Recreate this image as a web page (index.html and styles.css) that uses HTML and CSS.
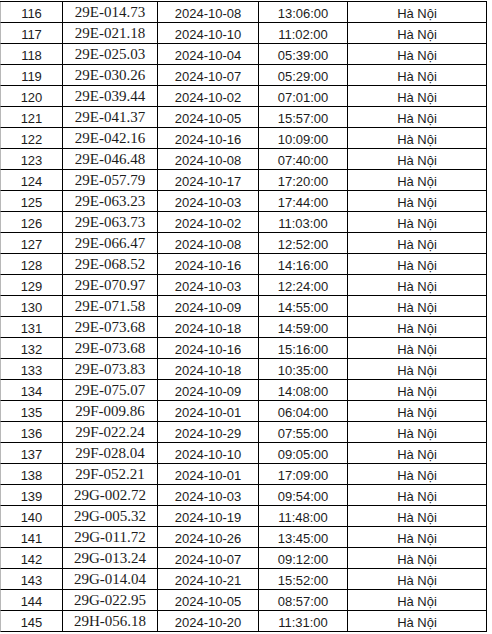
FILE: index.html
```html
<!DOCTYPE html>
<html lang="vi">
<head>
<meta charset="utf-8">
<title>Danh sách</title>
<link rel="stylesheet" href="styles.css">
</head>
<body>
<div class="sheet">
<div class="row"><div class="c n">116</div><div class="c p">29E-014.73</div><div class="c d">2024-10-08</div><div class="c t">13:06:00</div><div class="c l">Hà Nội</div></div>
<div class="row"><div class="c n">117</div><div class="c p">29E-021.18</div><div class="c d">2024-10-10</div><div class="c t">11:02:00</div><div class="c l">Hà Nội</div></div>
<div class="row"><div class="c n">118</div><div class="c p">29E-025.03</div><div class="c d">2024-10-04</div><div class="c t">05:39:00</div><div class="c l">Hà Nội</div></div>
<div class="row"><div class="c n">119</div><div class="c p">29E-030.26</div><div class="c d">2024-10-07</div><div class="c t">05:29:00</div><div class="c l">Hà Nội</div></div>
<div class="row"><div class="c n">120</div><div class="c p">29E-039.44</div><div class="c d">2024-10-02</div><div class="c t">07:01:00</div><div class="c l">Hà Nội</div></div>
<div class="row"><div class="c n">121</div><div class="c p">29E-041.37</div><div class="c d">2024-10-05</div><div class="c t">15:57:00</div><div class="c l">Hà Nội</div></div>
<div class="row"><div class="c n">122</div><div class="c p">29E-042.16</div><div class="c d">2024-10-16</div><div class="c t">10:09:00</div><div class="c l">Hà Nội</div></div>
<div class="row"><div class="c n">123</div><div class="c p">29E-046.48</div><div class="c d">2024-10-08</div><div class="c t">07:40:00</div><div class="c l">Hà Nội</div></div>
<div class="row"><div class="c n">124</div><div class="c p">29E-057.79</div><div class="c d">2024-10-17</div><div class="c t">17:20:00</div><div class="c l">Hà Nội</div></div>
<div class="row"><div class="c n">125</div><div class="c p">29E-063.23</div><div class="c d">2024-10-03</div><div class="c t">17:44:00</div><div class="c l">Hà Nội</div></div>
<div class="row"><div class="c n">126</div><div class="c p">29E-063.73</div><div class="c d">2024-10-02</div><div class="c t">11:03:00</div><div class="c l">Hà Nội</div></div>
<div class="row"><div class="c n">127</div><div class="c p">29E-066.47</div><div class="c d">2024-10-08</div><div class="c t">12:52:00</div><div class="c l">Hà Nội</div></div>
<div class="row"><div class="c n">128</div><div class="c p">29E-068.52</div><div class="c d">2024-10-16</div><div class="c t">14:16:00</div><div class="c l">Hà Nội</div></div>
<div class="row"><div class="c n">129</div><div class="c p">29E-070.97</div><div class="c d">2024-10-03</div><div class="c t">12:24:00</div><div class="c l">Hà Nội</div></div>
<div class="row"><div class="c n">130</div><div class="c p">29E-071.58</div><div class="c d">2024-10-09</div><div class="c t">14:55:00</div><div class="c l">Hà Nội</div></div>
<div class="row"><div class="c n">131</div><div class="c p">29E-073.68</div><div class="c d">2024-10-18</div><div class="c t">14:59:00</div><div class="c l">Hà Nội</div></div>
<div class="row"><div class="c n">132</div><div class="c p">29E-073.68</div><div class="c d">2024-10-16</div><div class="c t">15:16:00</div><div class="c l">Hà Nội</div></div>
<div class="row"><div class="c n">133</div><div class="c p">29E-073.83</div><div class="c d">2024-10-18</div><div class="c t">10:35:00</div><div class="c l">Hà Nội</div></div>
<div class="row"><div class="c n">134</div><div class="c p">29E-075.07</div><div class="c d">2024-10-09</div><div class="c t">14:08:00</div><div class="c l">Hà Nội</div></div>
<div class="row"><div class="c n">135</div><div class="c p">29F-009.86</div><div class="c d">2024-10-01</div><div class="c t">06:04:00</div><div class="c l">Hà Nội</div></div>
<div class="row"><div class="c n">136</div><div class="c p">29F-022.24</div><div class="c d">2024-10-29</div><div class="c t">07:55:00</div><div class="c l">Hà Nội</div></div>
<div class="row"><div class="c n">137</div><div class="c p">29F-028.04</div><div class="c d">2024-10-10</div><div class="c t">09:05:00</div><div class="c l">Hà Nội</div></div>
<div class="row"><div class="c n">138</div><div class="c p">29F-052.21</div><div class="c d">2024-10-01</div><div class="c t">17:09:00</div><div class="c l">Hà Nội</div></div>
<div class="row"><div class="c n">139</div><div class="c p">29G-002.72</div><div class="c d">2024-10-03</div><div class="c t">09:54:00</div><div class="c l">Hà Nội</div></div>
<div class="row"><div class="c n">140</div><div class="c p">29G-005.32</div><div class="c d">2024-10-19</div><div class="c t">11:48:00</div><div class="c l">Hà Nội</div></div>
<div class="row"><div class="c n">141</div><div class="c p">29G-011.72</div><div class="c d">2024-10-26</div><div class="c t">13:45:00</div><div class="c l">Hà Nội</div></div>
<div class="row"><div class="c n">142</div><div class="c p">29G-013.24</div><div class="c d">2024-10-07</div><div class="c t">09:12:00</div><div class="c l">Hà Nội</div></div>
<div class="row"><div class="c n">143</div><div class="c p">29G-014.04</div><div class="c d">2024-10-21</div><div class="c t">15:52:00</div><div class="c l">Hà Nội</div></div>
<div class="row"><div class="c n">144</div><div class="c p">29G-022.95</div><div class="c d">2024-10-05</div><div class="c t">08:57:00</div><div class="c l">Hà Nội</div></div>
<div class="row"><div class="c n">145</div><div class="c p">29H-056.18</div><div class="c d">2024-10-20</div><div class="c t">11:31:00</div><div class="c l">Hà Nội</div></div>
</div>
</body>
</html>
```

FILE: styles.css
```css
html, body {
  margin: 0;
  padding: 0;
  background: #fff;
}
body {
  font-family: "Liberation Sans", Arial, sans-serif;
  font-size: 13px;
  color: #1c1c1c;
}
.sheet {
  margin-top: 1px;
  width: 487px;
  border-top: 1px solid #000;
}
.row {
  display: grid;
  grid-template-columns: 63px 95px 101px 89px 139px;
  height: 21px;
}
.c {
  box-sizing: border-box;
  height: 21px;
  border-right: 1px solid #000;
  border-bottom: 1px solid #000;
  display: flex;
  align-items: flex-end;
  justify-content: center;
  line-height: 16px;
  white-space: nowrap;
}
.n {
  border-left: 1px solid #b8b8b8;
}
.p {
  font-family: "Liberation Serif", "Times New Roman", serif;
  font-size: 15px;
  padding-bottom: 2px;
}
```
